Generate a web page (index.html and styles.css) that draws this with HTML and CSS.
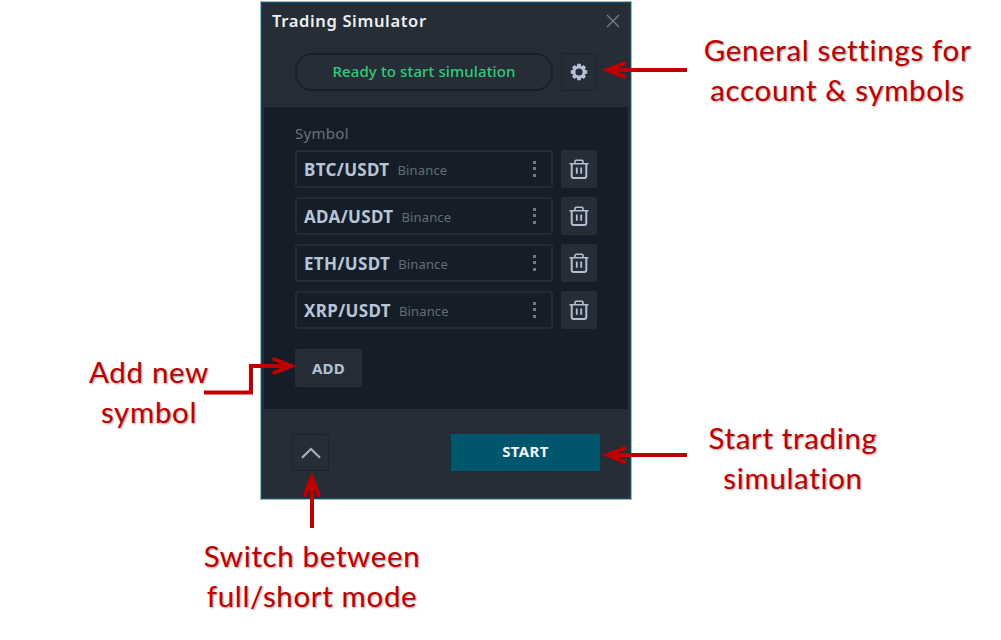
FILE: index.html
```html
<!DOCTYPE html>
<html lang="en">
<head>
<meta charset="utf-8">
<title>Trading Simulator</title>
<link rel="stylesheet" href="styles.css">
</head>
<body>
<svg class="defs" width="0" height="0" aria-hidden="true">
  <symbol id="trash" viewBox="0 0 20 20">
    <path d="M.5 4.700h19M6 4.200V2.400Q6 1.200 7.200 1.200h5.600Q14 1.200 14 2.400v1.800" fill="none" stroke="currentColor" stroke-width="1.600"/>
    <path d="M2.700 5v12Q2.700 18.900 4.600 18.900h10.800Q17.300 18.900 17.300 17V5" fill="none" stroke="currentColor" stroke-width="2"/>
    <path d="M7.800 8.500v6.300M12.200 8.500v6.300" stroke="currentColor" stroke-width="1.800"/>
  </symbol>
</svg>
<main class="stage">
  <aside class="side side-left">
    <p class="note note-add"><span>Add new</span><span>symbol</span></p>
  </aside>
  <div class="middle">
    <section class="panel">
      <header class="head">
        <div class="titlebar">
          <h1 class="title">Trading Simulator</h1>
          <svg class="close" viewBox="0 0 14 14"><path d="M1 1l12 12M13 1L1 13" stroke="#757d86" stroke-width="1.400"/></svg>
        </div>
        <div class="status-row">
          <div class="status"><span>Ready to start simulation</span></div>
          <button class="ghost gear-btn" aria-label="Settings">
            <svg class="gear" viewBox="0 0 18 18"><g fill="#b4c1d4"><path id="tooth" d="M7.300.8h3.400l.5 3H6.800z"/><use href="#tooth" transform="rotate(45 9 9)"/><use href="#tooth" transform="rotate(90 9 9)"/><use href="#tooth" transform="rotate(135 9 9)"/><use href="#tooth" transform="rotate(180 9 9)"/><use href="#tooth" transform="rotate(225 9 9)"/><use href="#tooth" transform="rotate(270 9 9)"/><use href="#tooth" transform="rotate(315 9 9)"/></g><circle cx="9" cy="9" r="4.900" fill="none" stroke="#b4c1d4" stroke-width="2.600"/></svg>
          </button>
        </div>
      </header>
      <div class="body">
        <div class="label"><span>Symbol</span></div>
        <div class="rows">
          <div class="row"><div class="field"><b class="pair">BTC/USDT</b><span class="exchange">Binance</span><i class="dots"></i></div><button class="trash"><svg><use href="#trash"/></svg></button></div>
          <div class="row"><div class="field"><b class="pair">ADA/USDT</b><span class="exchange">Binance</span><i class="dots"></i></div><button class="trash"><svg><use href="#trash"/></svg></button></div>
          <div class="row"><div class="field"><b class="pair">ETH/USDT</b><span class="exchange">Binance</span><i class="dots"></i></div><button class="trash"><svg><use href="#trash"/></svg></button></div>
          <div class="row"><div class="field"><b class="pair">XRP/USDT</b><span class="exchange">Binance</span><i class="dots"></i></div><button class="trash"><svg><use href="#trash"/></svg></button></div>
        </div>
        <button class="add"><span>ADD</span></button>
      </div>
      <footer class="foot">
        <button class="ghost mode" aria-label="Toggle mode"><svg class="chevron" viewBox="0 0 20 12"><path d="M1 10.800L10 2l9 8.800" fill="none" stroke="#a3afbd" stroke-width="2.200"/></svg></button>
        <button class="start"><span>START</span></button>
      </footer>
    </section>
    <p class="note note-switch"><span>Switch between</span><span>full/short mode</span></p>
  </div>
  <aside class="side side-right">
    <p class="note note-settings"><span>General settings for</span><span>account &amp; symbols</span></p>
    <p class="note note-start"><span>Start trading</span><span>simulation</span></p>
  </aside>
  <svg class="arrows" viewBox="0 0 1001 640">
    <g fill="none" stroke="#c00000" stroke-width="4">
      <path d="M687 70H608"/>
      <path d="M687 455H608"/>
      <path d="M312 528V480"/>
      <path d="M204 392.500H251V366H290"/>
    </g>
    <g fill="#c00000">
      <path id="head" d="M602 70L624.500 61.200A2 2 0 0 1 626 64.800L614 70L626 75.200A2 2 0 0 1 624.500 78.800Z"/>
      <use href="#head" y="385"/>
      <use href="#head" transform="translate(382 -130) rotate(90)"/>
      <use href="#head" transform="translate(899 436) rotate(180)"/>
    </g>
  </svg>
</main>
</body>
</html>
```
FILE: styles.css
```css
* { box-sizing: border-box; }
body { margin: 0; background: #fff; font-family: "Noto Sans", "Open Sans", sans-serif; }
button { border: 0; padding: 0; font: inherit; display: flex; align-items: center; justify-content: center; }
.defs { position: absolute; }
.stage { position: relative; width: 1001px; height: 640px; overflow: hidden; display: grid; grid-template-columns: 260px 372px 1fr; }
.arrows { position: absolute; inset: 0; width: 1001px; height: 640px; pointer-events: none; }

.panel { margin-top: 1px; height: 499px; border: 1px solid #a9b4b7; background: #262d36; box-shadow: inset 0 0 0 1px #075567; padding: 2px 3px; display: flex; flex-direction: column; }
.head { height: 103px; }
.titlebar { height: 33px; padding: 0 8px; display: flex; align-items: center; justify-content: space-between; }
.title { margin: 0; color: #edf0f2; font-size: 16.500px; line-height: 32px; font-weight: 600; letter-spacing: .65px; white-space: nowrap; }
.close { width: 14px; height: 14px; }
.status-row { display: flex; gap: 8px; padding: 16px 31px 0; }
.status { width: 258px; height: 38px; border: 2px solid #18212b; border-radius: 17px; display: flex; align-items: center; justify-content: center; color: #2ecc7c; font-size: 15px; line-height: 20px; font-weight: 500; letter-spacing: .12px; padding-bottom: 2px; white-space: nowrap; }
.ghost { background: transparent; border: 1px solid #1c252e; border-radius: 2px; }
.gear-btn { width: 36px; height: 38px; }
.gear { width: 18px; height: 18px; }

.body { height: 302px; background: #151e28; padding: 16px 31px 0; }
.label { height: 27px; line-height: 20px; color: #69727c; font-size: 15px; letter-spacing: .3px; }
.rows { display: grid; gap: 9px; }
.row { display: flex; gap: 8px; height: 38px; }
.field { width: 258px; border: 2px solid #222b35; border-radius: 2px; display: flex; align-items: center; padding: 0 15px 0 7px; white-space: nowrap; }
.pair { color: #b8c5d8; font-size: 17px; letter-spacing: .35px; font-weight: 700; }
.exchange { color: #636d77; font-size: 13px; letter-spacing: .15px; margin-left: 8px; padding-top: 2px; }
.dots { margin-left: auto; width: 3px; height: 16px; background: linear-gradient(#717a83 3px, transparent 3px 6.500px, #717a83 6.500px 9.500px, transparent 9.500px 13px, #717a83 13px); }
.trash { width: 36px; height: 38px; border-radius: 2px; background: #262d36; color: #b1bfd2; }
.trash svg { width: 20px; height: 20px; }
.add { margin-top: 20px; width: 67px; height: 38px; border-radius: 2px; background: #262d36; color: #b5c2d4; font-size: 15px; font-weight: 700; letter-spacing: .2px; }

.foot { flex: 1; display: flex; justify-content: space-between; padding: 25px 28px 0; }
.mode { width: 37px; height: 37px; }
.chevron { width: 20px; height: 12px; }
.start { width: 149px; height: 37px; border-radius: 1px; background: #00576d; color: #f2f7f8; font-size: 15px; font-weight: 700; letter-spacing: .4px; padding-bottom: 3px; }

.note { margin: 0; font-family: Lato, sans-serif; font-size: 29.500px; line-height: 40px; letter-spacing: .65px; font-variant-ligatures: none; color: #c00000; text-shadow: 1px 1px 2px rgba(0, 0, 0, .4); display: flex; flex-direction: column; align-items: center; white-space: nowrap; }
.side-left { padding: 352px 0 0 38px; }
.note-add { width: 222px; }
.note-switch { margin: 36px 0 0 -134px; width: 372px; }
.side-right { padding-top: 30px; }
.note-settings { width: 411px; }
.note-start { width: 322px; margin-top: 308px; }
```
